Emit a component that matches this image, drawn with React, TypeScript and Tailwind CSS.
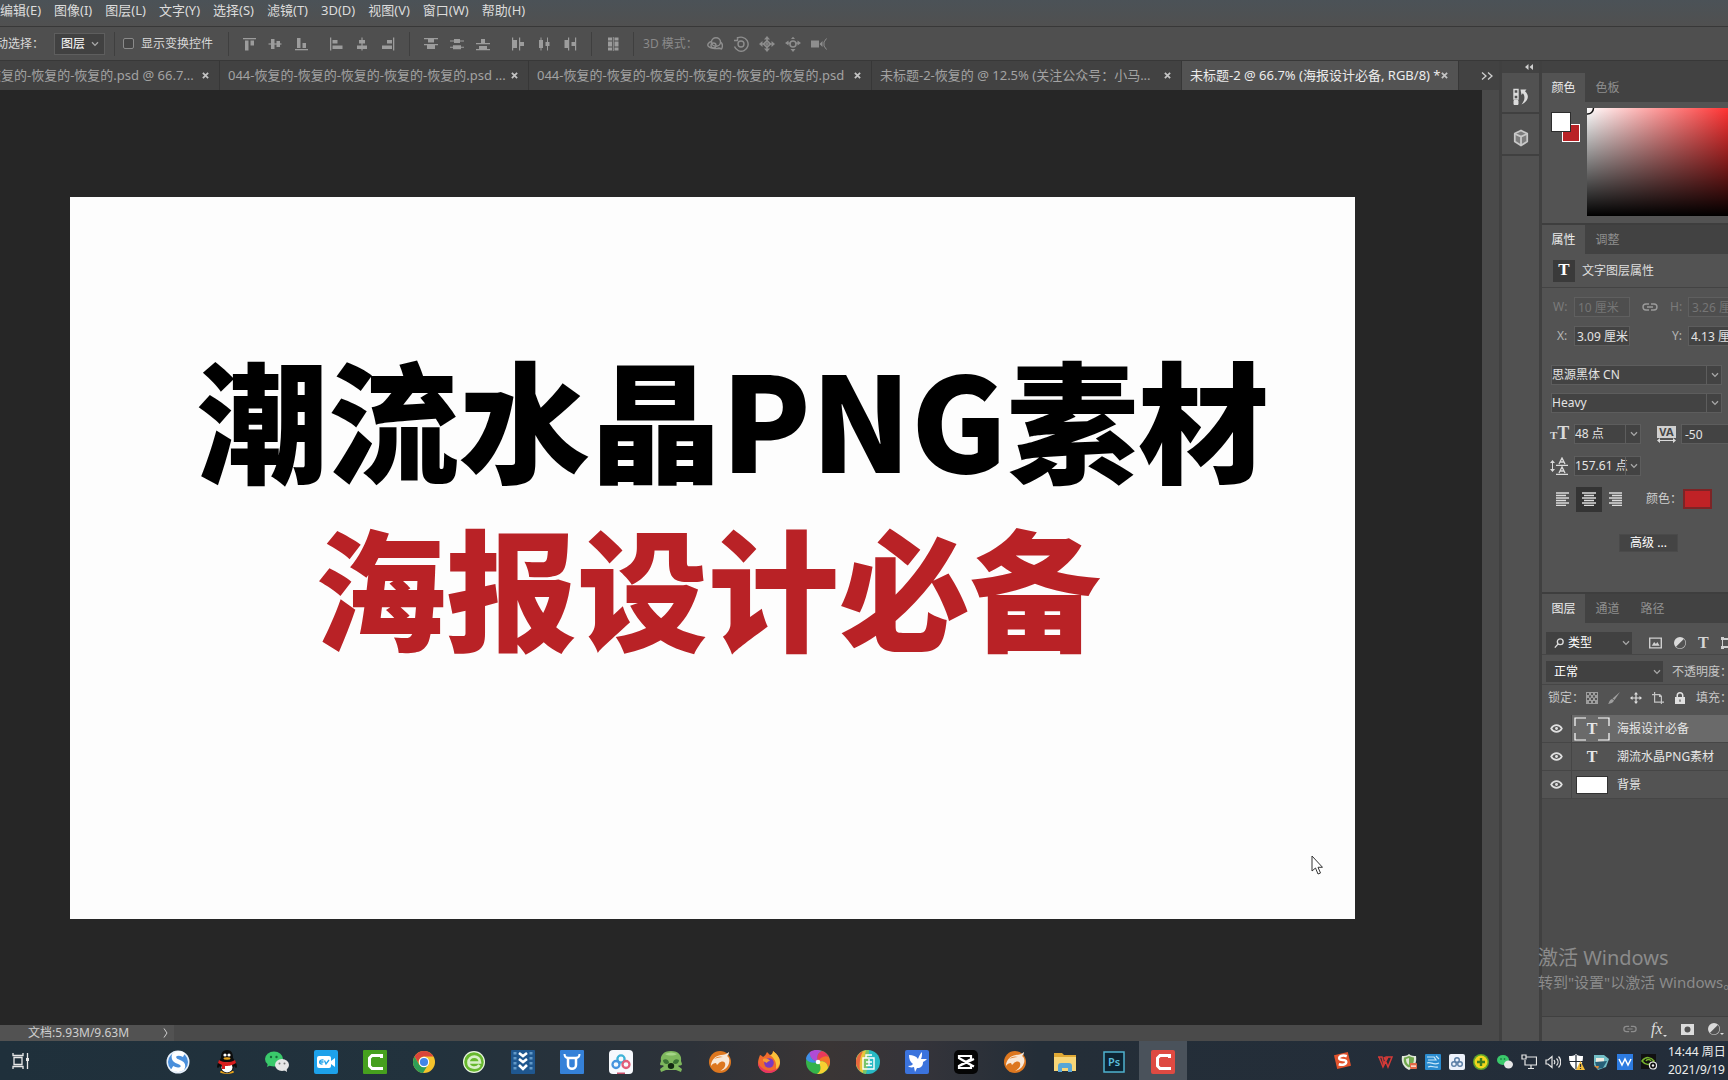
import React from "react";
import type { ReactNode } from "react";

const menus = ["编辑(E)", "图像(I)", "图层(L)", "文字(Y)", "选择(S)", "滤镜(T)", "3D(D)", "视图(V)", "窗口(W)", "帮助(H)"];

const tabs = [
  { title: "恢复的-恢复的-恢复的.psd @ 66.7...", width: "w-[220px]", active: false },
  { title: "044-恢复的-恢复的-恢复的-恢复的-恢复的.psd ...", width: "w-[309px]", active: false },
  { title: "044-恢复的-恢复的-恢复的-恢复的-恢复的-恢复的.psd", width: "w-[343px]", active: false },
  { title: "未标题-2-恢复的 @ 12.5% (关注公众号：小马...", width: "w-[310px]", active: false },
  { title: "未标题-2 @ 66.7% (海报设计必备, RGB/8) *", width: "w-[277px]", active: true },
];

function Icon({ children, size = "size-4", box = "0 0 16 16", color = "text-[#9c9c9c]" }: { children: ReactNode; size?: string; box?: string; color?: string }) {
  return (
    <svg viewBox={box} className={`${size} ${color} shrink-0`} fill="currentColor" aria-hidden="true">
      {children}
    </svg>
  );
}

function Chevron() {
  return (
    <svg viewBox="0 0 8 6" className="h-1.5 w-2 text-[#a8a8a8]" fill="none" stroke="currentColor" strokeWidth="1.3" aria-hidden="true">
      <path d="M1 1.2 4 4.4 7 1.2" />
    </svg>
  );
}

function Divider() {
  return <div className="h-6 w-px shrink-0 bg-[#3f3f3f]" />;
}

/* ---------- options bar ---------- */

const alignIcons: { name: string; art: ReactNode }[][] = [
  [
    { name: "顶对齐", art: <><path d="M2 2h13v1.3H2z" /><path d="M4 4.5h3.5v10H4zM9.5 4.5H13v5H9.5z" /></> },
    { name: "垂直居中对齐", art: <><path d="M1.5 7.4h13v1.2h-13z" /><path d="M4 3h3.5v10H4zM9.5 5H13v6H9.5z" /></> },
    { name: "底对齐", art: <><path d="M2 13h13v1.3H2z" /><path d="M4 2h3.5v10H4zM9.5 7H13v5H9.5z" /></> },
  ],
  [
    { name: "左对齐", art: <><path d="M2 1.5h1.3v13H2z" /><path d="M4.5 4h5v3.500h-5zM4.500 9.500h10V13h-10z" /></> },
    { name: "水平居中对齐", art: <><path d="M7.400 1.500h1.200v13H7.400z" /><path d="M5 4h6v3.500H5zM3 9.500h10V13H3z" /></> },
    { name: "右对齐", art: <><path d="M13 1.500h1.300v13H13z" /><path d="M7 4h5v3.500H7zM2 9.500h10V13H2z" /></> },
  ],
  [
    { name: "按顶分布", art: <><path d="M1 2h14v1.200H1zM1 8h14v1.200H1z" /><path d="M5 3h6v3.500H5zM4 9h8v4H4z" /></> },
    { name: "垂直居中分布", art: <><path d="M1 4.500h14v1H1zM1 10.800h14v1H1z" /><path d="M5 3h6v4H5zM4 9.300h8v4H4z" /></> },
    { name: "按底分布", art: <><path d="M1 7h14v1.200H1zM1 13h14v1.200H1z" /><path d="M6 3h4v4H6zM4 10h8v3.500H4z" /></> },
  ],
  [
    { name: "按左分布", art: <><path d="M2 1.500h1.200v13H2zM9 1.500h1.200v13H9z" /><path d="M3 4h4v8H3zM10 6h4v4h-4z" /></> },
    { name: "水平居中分布", art: <><path d="M4.500 1.500h1v13h-1zM11 1.500h1v13h-1z" /><path d="M3 4h4v8H3zM9.500 6h4v4h-4z" /></> },
    { name: "按右分布", art: <><path d="M6 1.500h1.200v13H6zM13 1.500h1.200v13H13z" /><path d="M2.500 4h4v8h-4zM9.500 6h4v4h-4z" /></> },
  ],
];

const modeIcons: { name: string; art: ReactNode }[] = [
  { name: "旋转 3D 对象", art: <g fill="none" stroke="currentColor" strokeWidth="1.4"><ellipse cx="9" cy="6" rx="4.500" ry="4.300" /><path d="M4.500 5.500C1 6.500 0 9 1.500 10.500s7 3 12 1.500M13.500 6c2 1.500 2.500 4 1 7l-4-1" /><circle cx="6.500" cy="9.500" r="2.500" /></g> },
  { name: "滚动 3D 对象", art: <g fill="none" stroke="currentColor" strokeWidth="1.4"><circle cx="8" cy="8" r="3" /><path d="M4 2.500A7 7 0 1 1 1.500 10.500M1 4.500h3.500V1" /></g> },
  { name: "拖动 3D 对象", art: <><path d="m8 0 3 3.500H5zM8 16l3-3.500H5zM0 8l3.500-3v6zM16 8l-3.500-3v6z" /><path fill="none" stroke="currentColor" strokeWidth="1.500" d="M8 4.500 11.500 8 8 11.500 4.500 8z" /><path d="M7.400 3h1.200v10H7.400zM3 7.400h10v1.200H3z" /></> },
  { name: "滑动 3D 对象", art: <><path d="m8 16 2.500-3h-5zM8 .8 10 3H6zM0 7l3.500-2.500v5zM16 7l-3.500-2.500v5z" /><circle cx="8" cy="8" r="3" fill="none" stroke="currentColor" strokeWidth="1.600" /><path d="M3 6.500h2.500v1.200H3zM10.500 6.500H13v1.200h-2.500z" /></> },
  { name: "缩放 3D 相机", art: <><path d="M0 4.500h8v7H0zM8.500 8 11.500 5v6z" /><path fill="none" stroke="currentColor" d="M15.500 2.500 13 6v4l2.500 3.500" /></> },
];

function OptionsBar() {
  return (
    <div className="flex h-[34px] shrink-0 items-center border-b border-[#383838] bg-[#4f4f4f] text-xs text-[#d8d8d8]">
      <label htmlFor="auto-select" className="-ml-1 w-[58px] shrink-0 whitespace-nowrap">动选择：</label>
      <div className="relative w-[51px] shrink-0">
        <select id="auto-select" className="h-[22px] w-full appearance-none border border-[#5e5e5e] bg-[#414141] pl-1.5 text-xs text-white">
          <option>图层</option>
          <option>组</option>
        </select>
        <span className="pointer-events-none absolute top-2 right-1.5"><Chevron /></span>
      </div>
      <div className="ml-[9px] flex shrink-0 items-center gap-2">
        <Divider />
        <label className="flex items-center gap-[7px] whitespace-nowrap">
          <input type="checkbox" className="size-[11px] appearance-none rounded-xs border border-[#8a8a8a] bg-[#454545]" />
          显示变换控件
        </label>
      </div>
      <div className="ml-[15px] flex shrink-0 items-center">
        <Divider />
        <div className="ml-3 flex gap-[19px]">
          {alignIcons.slice(0, 2).map((group, i) => (
            <div key={i} className="flex gap-2.5">
              {group.map((g) => <button key={g.name} type="button" aria-label={g.name}><Icon>{g.art}</Icon></button>)}
            </div>
          ))}
        </div>
        <div className="mx-[13px]"><Divider /></div>
        <div className="flex gap-[19px]">
          {alignIcons.slice(2).map((group, i) => (
            <div key={i} className="flex gap-2.5">
              {group.map((g) => <button key={g.name} type="button" aria-label={g.name}><Icon>{g.art}</Icon></button>)}
            </div>
          ))}
        </div>
        <div className="mx-[13px]"><Divider /></div>
        <button type="button" aria-label="自动对齐图层">
          <Icon><path d="M3 1.500h4v3H3zM3 5.500h4v5H3zM3 11.500h4v3H3zM9.500 1.500h4v3h-4zM9.500 5.500h4v5h-4zM9.500 11.500h4v3h-4zM7.800 1h.9v14h-.9z" /></Icon>
        </button>
        <div className="mr-[9px] ml-3"><Divider /></div>
        <span className="w-16 whitespace-nowrap text-[#8a8a8a]">3D 模式：</span>
        <div className="flex gap-2.5">
          {modeIcons.map((m) => <button key={m.name} type="button" aria-label={m.name}><Icon color="text-[#8e8e8e]">{m.art}</Icon></button>)}
        </div>
      </div>
    </div>
  );
}

function DocumentTabs() {
  return (
    <div className="flex h-[29px] shrink-0 items-stretch bg-[#424242] text-[13px]">
      {tabs.map((t, i) => (
        <div key={i} className={`${t.width} ${t.active ? "bg-[#535353] text-[#ececec]" : "text-[#a3a3a3]"} flex shrink-0 items-center justify-between border-r border-[#373737] pr-2.5 pl-2`}>
          <button type="button" className={`${i === 0 ? "-ml-5" : ""} shrink-0 whitespace-nowrap`}>{t.title}</button>
          <button type="button" aria-label="关闭" className="shrink-0 text-[#c4c4c4]">
            <svg viewBox="0 0 8 8" className="size-[7px]" stroke="currentColor" strokeWidth="2"><path d="m1 1 6 6M7 1 1 7" /></svg>
          </button>
        </div>
      ))}
      <button type="button" aria-label="更多文档" className="mr-1.5 ml-auto text-[#d0d0d0]">
        <svg viewBox="0 0 12 8" className="h-2 w-3" fill="none" stroke="currentColor" strokeWidth="1.3"><path d="m1 .5 4 3.500-4 3.500M7 .5l4 3.500-4 3.500" /></svg>
      </button>
    </div>
  );
}

function Canvas() {
  return (
    <main className="relative flex min-w-0 flex-1 bg-[#262626] pt-[107px] pr-[127px] pb-[106px] pl-[70px]">
      <div className="min-w-0 flex-1 overflow-hidden bg-[#fdfdfd] pt-[135px] font-['Noto_Sans_CJK_SC',sans-serif] text-[131px] leading-[168px] font-black whitespace-nowrap">
        <h1 className="pl-[127px] text-black">潮流水晶PNG素材</h1>
        <h2 className="pl-[245px] text-[#b92226]">海报设计必备</h2>
      </div>
      <svg viewBox="0 0 12 20" className="absolute right-[159px] bottom-[150px] h-5 w-3" fill="#fff" stroke="#333" aria-hidden="true">
        <path d="M1 1v15l3.500-3 2.500 6 2.500-1L7 12.300h4.500z" />
      </svg>
    </main>
  );
}

/* ---------- right side panels ---------- */

function DockStrip() {
  return (
    <div className="flex w-[41px] shrink-0 flex-col border-r-3 border-l-1 border-[#404040] bg-[#515151]">
      <div className="flex h-3 items-center justify-end bg-[#424242]">
        <svg viewBox="0 0 8 6" className="mr-1.5 h-1.5 w-2" fill="#cfcfcf"><path d="M3.500 0v6L0 3zM8 0v6L4.500 3z" /></svg>
      </div>
      <button type="button" aria-label="历史记录" className="flex h-[41px] items-center justify-center border-b-2 border-[#404040] pt-2">
        <svg viewBox="0 0 16 18" className="h-[18px] w-4" fill="none" stroke="#dcdcdc"><path strokeWidth="1.4" d="M1 1.500h4v4H1zM1 7h4v4H1z" /><path fill="#dcdcdc" d="M1 12.500h4v4H1z" /><path fill="#dcdcdc" stroke="none" d="M7.500 1.500h6l-1.500 1.700c4.500 4 4 9.500-3.500 13.300 3.200-4 4-7.800 1.400-11.200L8.500 7z" /></svg>
      </button>
      <button type="button" aria-label="3D" className="flex h-[42px] items-center justify-center border-b-2 border-[#404040] pt-2">
        <svg viewBox="0 0 18 20" className="h-[18px] w-4" fill="none" stroke="#c8c8c8" strokeWidth="2" strokeLinejoin="round"><path fill="#7d7d7d" d="m9 1.500 7 3.500v9L9 18.500 2 14V5z" /><path d="m2.500 5.500 6.500 3 6.500-3M9 8.500v9.500" /></svg>
      </button>
    </div>
  );
}

function PanelTabs({ names }: { names: string[] }) {
  return (
    <div className="flex h-[29px] shrink-0 bg-[#424242] text-xs">
      {names.map((n, i) => (
        <button key={n} type="button" className={i === 0 ? "w-[43px] bg-[#535353] text-[#ececec]" : "w-[45px] text-[#8f8f8f]"}>{n}</button>
      ))}
    </div>
  );
}

const field = "h-5 border border-[#5d5d5d] bg-[#434343] text-xs text-[#e4e4e4]";

function Combo({ label, value, width }: { label: string; value: string; width: string }) {
  return (
    <div className={`relative shrink-0 ${width}`}>
      <select aria-label={label} className={`${field} w-full appearance-none pr-3`}><option>{value}</option></select>
      <span className="pointer-events-none absolute inset-y-0 right-0 flex w-4 items-center justify-center border-l border-[#5d5d5d]"><Chevron /></span>
    </div>
  );
}

function ColorPanel() {
  return (
    <section>
      <PanelTabs names={["颜色", "色板"]} />
      <div className="flex h-[123px] items-start border-b-2 border-[#3e3e3e] pt-1.5">
        <div className="relative mt-1 ml-[9px] h-8 w-9 shrink-0">
          <button type="button" aria-label="背景色" className="absolute top-3 left-[11px] size-[18px] border border-white bg-[#b92226]" />
          <button type="button" aria-label="前景色" className="absolute top-0 left-0 size-5 border border-[#2d2d2d] bg-white" />
        </div>
        <div className="h-[108px] min-w-0 flex-1 overflow-hidden bg-[linear-gradient(to_top,#000,transparent),linear-gradient(to_right,#fff,#f00_125%)]">
          <svg viewBox="0 0 8 8" className="size-2" fill="none" stroke="#111" strokeWidth="1.5"><path d="M6.500 0A6 6 0 0 1 0 6" /></svg>
        </div>
      </div>
    </section>
  );
}

const lineArt = {
  left: "M0 1h13M0 3.5h10M0 6h13M0 8.5h10M0 11h13M0 13.5h10",
  center: "M0 1h14M2 3.5h10M0 6h14M2 8.5h10M0 11h14M2 13.5h10",
  right: "M1 1h13M4 3.5h10M1 6h13M4 8.5h10M1 11h13M4 13.5h10",
};

function PropertiesPanel() {
  return (
    <section className="h-[369px] shrink-0 overflow-hidden border-b-2 border-[#3e3e3e] text-xs whitespace-nowrap">
      <PanelTabs names={["属性", "调整"]} />
      <div className="flex h-[34px] items-center gap-[7px] border-b border-[#434343] pl-[11px] text-[#dedede]">
        <span className="flex size-[22px] items-center justify-center bg-[#3a3a3a] font-['Liberation_Serif',serif] text-[17px] font-bold text-white">T</span>
        文字图层属性
      </div>
      <div className="mt-[9px] flex h-5 items-center pl-[11px] text-[#7b7b7b]">
        <label htmlFor="pw" className="w-[21px] shrink-0">W:</label>
        <input id="pw" disabled defaultValue="10 厘米" className="h-5 w-14 shrink-0 border border-[#5f5f5f] bg-[#4e4e4e] px-[3px] text-xs text-[#757575]" />
        <svg viewBox="0 0 16 8" className="mx-3 h-2 w-4 shrink-0" fill="none" stroke="#9b9b9b" strokeWidth="1.4"><path d="M7 1H4a3 3 0 0 0 0 6h3M9 1h3a3 3 0 0 1 0 6H9M5 4h6" /></svg>
        <label htmlFor="ph" className="w-[18px] shrink-0">H:</label>
        <input id="ph" disabled defaultValue="3.26 厘米" className="h-5 w-14 shrink-0 border border-[#5f5f5f] bg-[#4e4e4e] px-[3px] text-xs text-[#757575]" />
      </div>
      <div className="mt-[9px] flex h-5 items-center pl-[15px] text-[#b5b5b5]">
        <label htmlFor="px" className="w-[17px] shrink-0">X:</label>
        <input id="px" defaultValue="3.09 厘米" className={`${field} w-14 shrink-0 pl-[2px]`} />
        <label htmlFor="py" className="ml-[42px] w-4 shrink-0">Y:</label>
        <input id="py" defaultValue="4.13 厘米" className={`${field} w-14 shrink-0 pl-[2px]`} />
      </div>
      <div className="mt-[19px] flex flex-col gap-2 pl-[9px]">
        <Combo label="字体" value="思源黑体 CN" width="w-[171px]" />
        <Combo label="字重" value="Heavy" width="w-[171px]" />
      </div>
      <div className="mt-[11px] flex h-5 items-center pl-2">
        <span className="flex w-6 shrink-0 items-baseline font-['Liberation_Serif',serif] leading-5 font-bold text-[#dadada]"><span className="text-[11px]">T</span><span className="text-[18px]">T</span></span>
        <Combo label="字号" value="48 点" width="w-[67px]" />
        <span className="mr-[5px] ml-4 flex w-[19px] shrink-0 flex-col items-center text-[#dadada]">
          <span className="w-full bg-[#d0d0d0] text-center text-[11px] leading-3 font-bold text-[#444]">VA</span>
          <svg viewBox="0 0 19 5" className="h-[5px] w-[19px]" fill="currentColor"><path d="m0 2.500 3-2.500v2h13V0l3 2.500L16 5V3H3v2z" /></svg>
        </span>
        <input aria-label="字距" defaultValue="-50" className={`${field} w-16 shrink-0 pl-[3px]`} />
      </div>
      <div className="mt-3 flex h-5 items-center pl-2">
        <span className="flex w-6 shrink-0 items-center gap-px text-[#dadada]">
          <svg viewBox="0 0 5 12" className="h-3 w-[5px]" fill="currentColor"><path d="m2.500 0 2.500 3H3v6h2l-2.500 3L0 9h2V3H0z" /></svg>
          <svg viewBox="0 0 12 18" className="h-[18px] w-3" fill="none" stroke="currentColor" strokeWidth="1.3"><path d="M0 8.300h12M0 17.300h12M3 7l3-6 3 6M4 5h4M3 16l3-6 3 6M4 14h4" /></svg>
        </span>
        <Combo label="行距" value="157.61 点" width="w-[67px]" />
      </div>
      <div className="mt-2.5 flex h-[26px] items-center pl-2">
        {(["left", "center", "right"] as const).map((a) => (
          <button key={a} type="button" aria-label={a} className={`${a === "center" ? "bg-[#343434]" : ""} flex h-[25px] w-[26px] items-center justify-center`}>
            <svg viewBox="0 0 14 14" className="size-3.5" stroke="#dcdcdc" strokeWidth="1.3"><path d={lineArt[a]} /></svg>
          </button>
        ))}
        <label htmlFor="text-color" className="ml-[18px] w-[37px] shrink-0 text-[#cfcfcf]">颜色：</label>
        <button id="text-color" type="button" aria-label="文字颜色" className="h-5 w-[29px] shrink-0 border-2 border-[#7d2426] bg-[#c02226]" />
      </div>
      <button type="button" className="mt-[22px] ml-[77px] h-[18px] w-[59px] border border-[#4a4a4a] bg-[#444] text-xs leading-4 text-white">高级 ...</button>
    </section>
  );
}

function Eye() {
  return (
    <svg viewBox="0 0 14 10" className="h-[9px] w-[13px]" fill="none" stroke="#e0e0e0" strokeWidth="1.7" aria-hidden="true">
      <path d="M1 5c3-5 9-5 12 0-3 5-9 5-12 0z" /><circle cx="7" cy="5" r="1.600" fill="#e0e0e0" stroke="none" />
    </svg>
  );
}

const layers = [
  { name: "海报设计必备", kind: "text", selected: true },
  { name: "潮流水晶PNG素材", kind: "text", selected: false },
  { name: "背景", kind: "fill", selected: false },
];

function LayersPanel() {
  return (
    <section className="flex min-h-0 flex-1 flex-col text-xs whitespace-nowrap">
      <PanelTabs names={["图层", "通道", "路径"]} />
      <div className="flex h-8 shrink-0 items-center border-b border-[#464646] pt-2 pl-1">
        <div className="relative w-[86px] shrink-0">
          <select aria-label="类型" className="h-[22px] w-full appearance-none bg-[#414141] pl-[22px] text-xs text-white"><option>类型</option></select>
          <svg viewBox="0 0 12 12" className="pointer-events-none absolute top-1.5 left-2 size-2.5" fill="none" stroke="#ddd" strokeWidth="1.6"><circle cx="7.500" cy="4.500" r="3.500" /><path d="m5 7-4 4.500" /></svg>
          <span className="pointer-events-none absolute top-2 right-0.5"><Chevron /></span>
        </div>
        <div className="ml-[17px] flex shrink-0 items-center gap-3">
          <Icon size="h-3 w-[13px]" box="0 0 14 12" color="text-[#cfcfcf]"><path fillRule="evenodd" d="M0 0h14v12H0zM1.500 1.500v9h11v-9z" /><path d="m3 9 2.500-4 2 2 1.500-2 2.500 4z" /></Icon>
          <Icon size="size-3" box="0 0 12 12" color="text-[#dadada]"><path d="M6 0a6 6 0 1 1 0 12A6 6 0 0 1 6 0zm3.800 2L2 9.800A5 5 0 0 0 9.800 2z" fillRule="evenodd" /></Icon>
          <span className="font-['Liberation_Serif',serif] text-base leading-4 font-bold text-[#d5d5d5]">T</span>
          <Icon size="size-3" box="0 0 12 12" color="text-[#cfcfcf]"><path d="M0 0h3v1h6V0h3v3h-1v6h1v3H9v-1H3v1H0V9h1V3H0zm2 3v6h7V3z" fillRule="evenodd" /></Icon>
        </div>
      </div>
      <div className="flex h-[30px] shrink-0 items-center border-b border-[#464646] pt-1 pl-1">
        <div className="relative w-[117px] shrink-0">
          <select aria-label="混合模式" className="h-[21px] w-full appearance-none bg-[#414141] pl-2 text-xs text-white"><option>正常</option></select>
          <span className="pointer-events-none absolute top-2 right-0.5"><Chevron /></span>
        </div>
        <span className="ml-[9px] text-[#c6c6c6]">不透明度：</span>
      </div>
      <div className="flex h-[30px] shrink-0 items-center pb-1 pl-1.5 text-[#c6c6c6]">
        <span className="w-[38px] shrink-0">锁定：</span>
        <div className="mr-2.5 flex items-center gap-2.5">
          <Icon size="size-3" box="0 0 12 12" color="text-[#9e9e9e]"><path fillRule="evenodd" d="M0 0h12v12H0zM1 1v2h2V1zm4 0v2h2V1zm4 0v2h2V1zM3 3.500v2h2v-2zm4 0v2h2v-2zM1 6v2h2V6zm4 0v2h2V6zm4 0v2h2V6zM3 9v2h2V9zm4 0v2h2V9z" /></Icon>
          <Icon size="size-3" box="0 0 12 12" color="text-[#9e9e9e]"><path d="M12 0 6.500 8 4.500 6.500zM4 7l2 1.500C5 11 3 11.500 0 12c1.500-1.500 1-4 4-5z" /></Icon>
          <Icon size="size-3" box="0 0 12 12" color="text-[#e0e0e0]"><path d="m6 0 2 2.500H6.600v2.900h2.900V4L12 6 9.500 8V6.600H6.600v2.900H8L6 12 4 9.500h1.400V6.600H2.500V8L0 6l2.500-2v1.400h2.900V2.500H4z" /></Icon>
          <Icon size="size-3" box="0 0 12 12" color="text-[#c4c4c4]"><path fillRule="evenodd" d="M2 0h1.200v2H8l2 2v5.500h2v1.200h-2V12H8.800v-1.300H2V3.200H0V2h2zm1.200 3.200v6.300h5.600V5H7V3.200z" /></Icon>
          <Icon size="size-3" box="0 0 12 12" color="text-[#e0e0e0]"><path fillRule="evenodd" d="M1 5h1.500V3.500a3.500 3.500 0 0 1 7 0V5H11v7H1zm3 0h4V3.500a2 2 0 0 0-4 0zm1.400 2.500v2.300h1.200V7.500z" /></Icon>
        </div>
        <span>填充：</span>
      </div>
      <ul className="min-h-0 flex-1 border-b border-[#404040] bg-[#4c4c4c] text-[#e6e6e6]">
        {layers.map((l) => (
          <li key={l.name} className={`${l.selected ? "bg-[#6a6a6a]" : "bg-[#535353]"} flex h-7 items-stretch border-b border-[#464646]`}>
            <button type="button" aria-label="可见性" className="flex w-[30px] shrink-0 items-center justify-center border-r border-[#464646] bg-[#535353]"><Eye /></button>
            <div className="flex w-[45px] shrink-0 items-center pl-0.5">
              {l.kind === "fill" ? (
                <span className="ml-0.5 h-[18px] w-8 border border-[#333] bg-white" />
              ) : (
                <span className="relative flex h-6 w-9 items-center justify-center font-['Liberation_Serif',serif] text-base font-bold">
                  T
                  {l.selected && (
                    <svg viewBox="0 0 36 24" className="absolute inset-0 h-6 w-9" fill="none" stroke="#fff" strokeWidth="1.2"><path d="M12 1H1v8M24 1h11v8M1 16v7h11M35 16v7H24" /></svg>
                  )}
                </span>
              )}
            </div>
            <span className="self-center">{l.name}</span>
          </li>
        ))}
      </ul>
      <div className="flex h-6 shrink-0 items-center gap-3.5 pl-[81px] text-[#dcdcdc]">
        <svg viewBox="0 0 16 8" className="h-2 w-3.5 shrink-0" fill="none" stroke="#8d8d8d" strokeWidth="1.4"><path d="M7 1H4a3 3 0 0 0 0 6h3M9 1h3a3 3 0 0 1 0 6H9M5 4h6" /></svg>
        <span className="flex items-end font-['Liberation_Serif',serif] text-base leading-4 italic">fx<svg viewBox="0 0 4 2" className="h-0.5 w-1" fill="currentColor"><path d="M0 0h4L2 2z" /></svg></span>
        <svg viewBox="0 0 13 11" className="h-[11px] w-[13px] shrink-0" fill="#dcdcdc"><path fillRule="evenodd" d="M0 0h13v11H0zm6.500 2.500a3 3 0 1 0 0 6 3 3 0 0 0 0-6z" /></svg>
        <span className="flex items-end">
          <Icon size="size-3" box="0 0 12 12" color="text-[#dadada]"><path d="M6 0a6 6 0 1 1 0 12A6 6 0 0 1 6 0zm3.800 2L2 9.800A5 5 0 0 0 9.800 2z" fillRule="evenodd" /></Icon>
          <svg viewBox="0 0 4 2" className="h-0.5 w-1" fill="currentColor"><path d="M0 0h4L2 2z" /></svg>
        </span>
      </div>
    </section>
  );
}

/* ---------- taskbar ---------- */

const Rhino = () => (
  <>
    <circle cx="12" cy="12" r="11" fill="#dd771f" />
    <path fill="#f8e8d8" d="M3 16c0-6 4-10 10-11 3 0 6-1 8-3 0 2-1 3-2 4 2 1 3 4 2 7-1 4-4 7-9 8 4-2 6-5 5-8-1-2-4-2-6 0l-2 2-1-2c-2 0-4 1-5 3z" />
    <path fill="#e58a3b" d="M6 9c3-3 7-3 9-2-3 0-6 1-9 2z" />
  </>
);

const taskIcons: { name: string; art: ReactNode }[] = [
  { name: "搜狗浏览器", art: <><circle cx="12" cy="12" r="11.500" fill="#e8f1fb" /><circle cx="12" cy="12" r="10" fill="#4a8fdb" /><path fill="none" stroke="#fff" strokeWidth="4.500" d="M18 5c-6-3-11-1-10 3 1 5 9 3 9 8 0 4-6 5-11 2" /></> },
  { name: "QQ", art: <><ellipse cx="12" cy="22" rx="7" ry="1.800" fill="#e8a31b" /><path fill="#0c0c0c" d="M12 0c5 0 6 4 6 8 2 3 4 6 4 9-1 2-2 0-3-1-1 5-3 7-7 7s-6-2-7-7c-1 1-2 3-3 1 0-3 2-6 4-9 0-4 1-8 6-8z" /><ellipse cx="12" cy="17.500" rx="5.500" ry="5" fill="#fff" /><path fill="#d81e1e" d="M4 10c5 3 11 3 16 0l1 3c-5 3-8 3-11 3v3H7v-4l-4-2z" /><circle cx="10" cy="5" r="1.600" fill="#fff" /><circle cx="14" cy="5" r="1.600" fill="#fff" /><ellipse cx="12" cy="8.500" rx="3.500" ry="1.200" fill="#e8a31b" /></> },
  { name: "微信", art: <><ellipse cx="9" cy="9" rx="9" ry="7.500" fill="#3ac96b" /><path fill="#3ac96b" d="m3 13-1 4 4-2z" /><circle cx="6" cy="7" r="1.200" fill="#17693a" /><circle cx="11.500" cy="7" r="1.200" fill="#17693a" /><ellipse cx="17" cy="15" rx="7" ry="6" fill="#e6e6e6" /><path fill="#e6e6e6" d="m19 20 3 2-.5-4z" /><circle cx="14.500" cy="13.500" r="1" fill="#777" /><circle cx="19.500" cy="13.500" r="1" fill="#777" /></> },
  { name: "EV录屏", art: <><rect width="24" height="24" rx="2" fill="#1da1ea" /><rect x="3" y="6" width="14" height="12" rx="2" fill="#fff" /><path fill="#fff" d="m17 11 4-3v9l-4-3z" /><path fill="none" stroke="#1da1ea" strokeWidth="1.300" d="M9.500 10c-5-.5-5 4.500-1 4m-2-2h3m1-1.500 1.500 3.500 3-4" /></> },
  { name: "Camtasia", art: <><rect width="24" height="24" rx="1" fill="#46a01e" /><path fill="none" stroke="#fff" strokeWidth="3" d="M18.500 8V5.500H9L6.500 8v8L9 18.500h9.500V17" /></> },
  { name: "Chrome", art: <><circle cx="12" cy="12" r="11" fill="#f5c32c" /><path fill="#d9453a" d="M2.500 6.500A11 11 0 0 1 21.500 6.500H12A5.500 5.500 0 0 0 7.200 14.700z" /><path fill="#2f9e57" d="M2.500 6.500A11 11 0 0 0 11 23l5-8.200a5.500 5.500 0 0 1-8.800 0z" /><circle cx="12" cy="12" r="5.200" fill="#fff" /><circle cx="12" cy="12" r="4.100" fill="#4285e8" /></> },
  { name: "360浏览器", art: <><circle cx="12" cy="12" r="11" fill="#eaf7df" /><circle cx="12" cy="12" r="9.800" fill="#67b82e" /><path fill="none" stroke="#d9f0c8" strokeWidth="2.700" d="M6 12.500h12c0-8-11.500-7.500-11.500 0 0 6 8.500 6.500 11 2.500" /></> },
  { name: "下载器", art: <><rect width="24" height="24" rx="1" fill="#1f578f" /><path stroke="#6299c8" strokeWidth="3" strokeDasharray="2.500 2.500" d="M4 2v20M20 2v20" /><path fill="none" stroke="#fff" strokeWidth="2.600" d="m8 3 4 3 4-3M8 9l4 3 4-3M8 15l4 4 4-4" /></> },
  { name: "U盘工具", art: <><rect width="24" height="24" rx="1" fill="#3581d8" /><path fill="none" stroke="#fff" strokeWidth="2.500" d="M8 8v7c0 5 8 5 8 0V8z" /><path fill="none" stroke="#fff" strokeWidth="2" d="M4.500 4c0 3 1 4 4 4M19.500 4c0 3-1 4-4 4" /></> },
  { name: "百度网盘", art: <><rect width="24" height="24" rx="4" fill="#f7f9fd" /><g fill="none" strokeWidth="2.300"><circle cx="12" cy="9" r="3.600" stroke="#3eb3d8" /><circle cx="7" cy="14.500" r="3.500" stroke="#4794df" /><circle cx="17" cy="14.500" r="3.500" stroke="#e35d79" /></g><path fill="#c64e69" d="M8 22.500h8V24H8z" /></> },
  { name: "绿色骷髅", art: <><path fill="#7eb85d" d="M12 1c8 0 11 5 10 10l1 3c0 2-3 1-4 2l4 3-1 3-5-2H7l-5 2-1-3 4-3c-1-1-4 0-4-2l1-3C1 6 4 1 12 1z" /><path fill="#a5d588" d="M6 4c4-2 8-2 12 0-3 2-9 2-12 0z" /><path fill="#3c7335" d="M4 10c3-2 6 0 6 3-2 2-6 1-6-3zM20 10c-3-2-6 0-6 3 2 2 6 1 6-3z" /><ellipse cx="12" cy="16" rx="3.200" ry="3" fill="#132813" /></> },
  { name: "犀牛", art: <Rhino /> },
  { name: "Firefox", art: <><path fill="#f06a2d" d="M3 5c1 0 2 1 3 2 2-1 3-3 4-5l3 3c2 0 3-2 3-4 5 4 7 7 7 12a11 10 0 0 1-22 0c0-3 1-5 2-8z" /><path fill="#e83464" d="M1 12c3 9 13 11 20 6-3 4-6 5-9 5C5 23 1 18 1 12z" /><path fill="#f9c13a" d="M16 1c5 4 7 7 7 12-1 3-2 5-4 6 1-7-2-11-6-14 2 0 3-2 3-4z" /><circle cx="12" cy="13" r="4.800" fill="#7b3ac0" /><path fill="#f59a35" d="M6 9c3-1 6 0 7 2-2 0-3 1-3 2l-4-2z" /></> },
  { name: "色轮", art: <><circle cx="12" cy="12" r="12" fill="#35b34a" /><path fill="#e9395b" d="M12 12C10 7 12 2 16 1c4 1 6 4 7 6-4-1-9 1-11 5z" /><path fill="#f3732a" d="M12 12c2-5 7-7 11-5 2 5 1 8-1 11 0-5-5-8-10-6z" /><path fill="#f7d032" d="M12 12c5-2 10 1 10 6-3 5-7 6-11 6 5-3 4-9 1-12z" /><path fill="#3f8ee8" d="M12 12C7 14 2 12 0 9c0-3 2-5 4-7-1 5 3 9 8 10z" /><path fill="#b04bd5" d="M12 12C7 11 3 7 4 2c4-3 9-2 12-1-4 1-6 6-4 11z" /><circle cx="12" cy="12" r="2.300" fill="#fff" /></> },
  { name: "彩虹便签", art: <><circle cx="12" cy="12" r="12" fill="#28b9c4" /><path fill="#79c46a" d="M13 0a12 12 0 0 0-3 24c2-8 3-16 3-24z" /><path fill="#e9c43a" d="M10 .2a12 12 0 0 0-3 22.700c0-8 1-16 3-22.700z" /><path fill="#e8673e" d="M7 1a12 12 0 0 0-3 20c-1-7 0-14 3-20z" /><path fill="none" stroke="#fff" strokeWidth="1.400" d="M7 8h11v11H7zM10 8V5h6M10 12h6M10 15.500h6M13 9v7" /></> },
  { name: "飞鸟", art: <><rect width="24" height="24" rx="2" fill="#3b73dd" /><path fill="#fff" d="M4 5c4 0 7 1 9 4 1-3 2-5 4-7 0 3 0 5-1 7h6c-1 1-2 2-4 3 0 4-2 6-6 6l-2 4-1-5c-3 1-5 0-6-1 3 0 4-1 5-2C5 12 4 9 4 5z" /></> },
  { name: "剪映", art: <><rect width="24" height="24" rx="5" fill="#050505" /><path fill="none" stroke="#fff" strokeWidth="2.200" d="M20 9 5 16v2h12v-3L5 8V6h12v3l-12 7M17 15l3 1.500" /></> },
  { name: "犀牛2", art: <Rhino /> },
  { name: "文件资源管理器", art: <><path fill="#e0a935" d="M1 3h8l2 2h12v4H1z" /><path fill="#f8d678" d="M1 7h22v14H1z" /><path fill="#58a6d6" d="M5 22v-6c0-2 1-3 3-3h8c2 0 3 1 3 3v6h-4v-4H9v4z" /></> },
  { name: "Photoshop", art: <><rect x="2" y="2" width="20" height="20" fill="#0d2433" stroke="#4fb2cf" strokeWidth="1.500" /><text x="12" y="16" textAnchor="middle" fontSize="11" fontWeight="600" fill="#5bbddb">Ps</text></> },
  { name: "Camtasia 录制", art: <><rect width="24" height="24" rx="2" fill="#de4a42" /><path fill="none" stroke="#fff" strokeWidth="3" d="M18.500 8V5.500H9L6.500 8v8L9 18.500h9.500V17" /></> },
];

const trayIcons: { name: string; art: ReactNode }[] = [
  { name: "WPS", art: <path fill="none" stroke="#d43a37" strokeWidth="1.500" d="M1 3h4l2 8 2-8h6l-4 10-4-10M2 3l4 10 5-10" /> },
  { name: "安全卫士", art: <><path fill="#dfe7d8" d="M8 0c2 2 5 2 7 2 1 6-1 11-7 14C2 13 0 8 1 2c2 0 5 0 7-2z" /><path fill="#72a94e" d="M8 2c2 1 3 1 5 1.500 0 5-1 8-5 10-4-2-6-5-5-10C5 3 6 3 8 2z" /><path fill="#dfe7d8" d="M8 4v7C6 10 5 8 5 5z" /><rect x="9" y="9" width="7" height="6" rx="1" fill="#e46946" /><path fill="#fff" d="M10 11.500h5v1.200h-5z" /></> },
  { name: "网络助手", art: <><rect width="16" height="16" rx="1" fill="#2a8bcf" /><path fill="none" stroke="#c9e7fa" strokeWidth="1.200" d="M2 3h7l2 3H3M2 9c4-2 6 3 12 0M3 13c4-2 6 1 10 0M11 2l3 3" /></> },
  { name: "百度网盘", art: <><rect width="16" height="16" rx="2" fill="#edf2fb" /><g fill="none" stroke="#5a7ea5" strokeWidth="1.400"><circle cx="8" cy="6" r="2.300" /><circle cx="5" cy="10" r="2.300" /><circle cx="11" cy="10" r="2.300" /></g></> },
  { name: "加速器", art: <><circle cx="8" cy="8" r="8" fill="#5ea52c" /><circle cx="8" cy="8" r="6.500" fill="#f2d71d" /><path stroke="#3f7d20" strokeWidth="2.400" d="M8 4v8M4 8h8" /></> },
  { name: "微信", art: <><ellipse cx="6" cy="6" rx="6" ry="5" fill="#3ac96b" /><circle cx="4" cy="5" r=".8" fill="#145c32" /><circle cx="7.500" cy="5" r=".8" fill="#145c32" /><ellipse cx="11.500" cy="10.500" rx="4.500" ry="4" fill="#e6e6e6" /></> },
  { name: "网络", art: <path fill="none" stroke="#e8e8e8" strokeWidth="1.200" d="M5 3h10.500v8H4V6M1 1h4v4H1zM10 11v3M7 14.500h6" /> },
  { name: "音量", art: <path fill="none" stroke="#e8e8e8" strokeWidth="1.200" d="M1 6h2l4-3.500v11L3 10H1zM9 6c1 1.500 1 3 0 4M11.500 4.500c2 2 2 5 0 7M13.500 2.500c3 3 3 8 0 11" /> },
  { name: "Windows 安全中心", art: <><path fill="#fff" d="M7 0c2 2 4 2 7 2 0 7-2 11-7 14C2 13 0 9 0 2c3 0 5 0 7-2z" /><path stroke="#222c37" strokeWidth="1.200" d="M7 1v14M0 7.500h14" /><path fill="#f4bd3a" d="m11.500 7 4.500 9H7z" /><path stroke="#333" strokeWidth="1.200" d="M11.500 10v3M11.500 14v1" /></> },
  { name: "工具箱", art: <><path fill="#74bfc7" d="M1 1h10l5 4-3 8-8 3-4-5z" /><path fill="#f0ece0" d="M3 4h8v4H3z" /><path fill="#276078" d="m2 8 12-1-4 7-6 1z" /><path fill="#d98c3f" d="M1 12h5l-1 3z" /></> },
  { name: "WiFi", art: <><rect width="16" height="16" fill="#2d7be0" /><path fill="none" stroke="#fff" strokeWidth="1.500" d="m2 5 3 6 3-6 3 6 3-6" /></> },
  { name: "NVIDIA", art: <><rect width="15" height="15" fill="#111" /><path fill="none" stroke="#77b52d" strokeWidth="1.500" d="M1 7c4-5 9-4 12 0-4 5-9 4-12 0zm4 0c1-2 4-2 5 0" /><circle cx="12" cy="11.500" r="3.500" fill="#111" stroke="#eee" strokeWidth="1.200" /><circle cx="12" cy="11.500" r="1.200" fill="#eee" /></> },
];

function Taskbar() {
  return (
    <footer className="flex h-[39px] shrink-0 items-center bg-[linear-gradient(to_right,#1f303b_0%,#22323d_25%,#2d3239_40%,#3a3535_48%,#35343a_53%,#242e38_60%,#232d3a_100%)]">
      <button type="button" aria-label="任务视图" className="ml-3 w-[142px] shrink-0">
        <svg viewBox="0 0 18 16" className="h-4 w-[18px]" fill="none" stroke="#e8e8e8" strokeWidth="1.3"><path d="M1 0v2.500h10V0M2 4.500h8v7H2zM1 16v-2.500h10V16M15.500 0v16" /><path strokeWidth="3" d="M15.500 5v3" /></svg>
      </button>
      <nav className="flex h-full w-[1033px] shrink-0 justify-between">
        {taskIcons.map((t, i) => (
          <button key={t.name} type="button" aria-label={t.name} className={`${i === taskIcons.length - 1 ? "bg-[#4a525b]" : ""} flex h-full w-12 items-center justify-center pt-0.5`}>
            <svg viewBox="0 0 24 24" className="size-6">{t.art}</svg>
          </button>
        ))}
      </nav>
      <div className="ml-auto flex h-full shrink-0 items-center">
        <button type="button" aria-label="搜狗输入法" className="mr-[26px]">
          <svg viewBox="0 0 16 16" className="size-[17px]"><path fill="#e2532d" d="m0 3 13-3 3 13-13 3z" /><path fill="none" stroke="#fff" strokeWidth="2.300" d="M12 4C8 2.500 4 4 5 6.500c1 2 6 0 6.500 2.500.5 3-4 3.500-7 2.500" /></svg>
        </button>
        <div className="flex gap-2 pt-0.5">
          {trayIcons.map((t) => (
            <button key={t.name} type="button" aria-label={t.name}><svg viewBox="0 0 16 16" className="size-4">{t.art}</svg></button>
          ))}
        </div>
        <div className="ml-[11px] w-[60px] overflow-hidden text-xs leading-[18px] whitespace-nowrap text-[#ededed]">
          <div>14:44 周日</div>
          <div>2021/9/19</div>
        </div>
      </div>
    </footer>
  );
}

export default function App() {
  return (
    <div className="flex h-screen flex-col overflow-hidden bg-[#4a4a4a] font-['Noto_Sans','Noto_Sans_CJK_SC',sans-serif] select-none">
      <nav className="flex h-[27px] shrink-0 gap-[13px] border-b border-[#383838] bg-linear-to-b from-[#4b5257] to-[#505050] text-[13px] leading-5 text-[#dcdcdc]">
        {menus.map((m) => <button key={m} type="button" className="shrink-0 self-start">{m}</button>)}
      </nav>
      <OptionsBar />
      <div className="flex min-h-0 flex-1">
        <div className="flex min-w-0 flex-1 flex-col">
          <DocumentTabs />
          <div className="flex min-h-0 flex-1">
            <Canvas />
            <div className="w-[17px] shrink-0 bg-[#4a4a4a]" />
          </div>
          <div className="flex h-4 shrink-0 items-center bg-[#4a4a4a] text-xs leading-4 text-[#cfcfcf]">
            <div className="flex h-full w-[174px] items-center justify-between bg-[#525252] pr-1.5 pl-7">
              文档:5.93M/9.63M
              <svg viewBox="0 0 5 10" className="h-2.5 w-[5px]" fill="none" stroke="#cfcfcf"><path d="m1 .5 3 4.500-3 4.500" /></svg>
            </div>
          </div>
        </div>
        <div className="w-[2px] shrink-0 bg-[#404040]" />
        <DockStrip />
        <aside className="relative flex w-[186px] shrink-0 flex-col bg-[#535353]">
          <div className="h-3 shrink-0 bg-[#424242]" />
          <div className="flex min-h-0 flex-1 flex-col overflow-hidden">
            <ColorPanel />
            <PropertiesPanel />
            <LayersPanel />
          </div>
          <div className="pointer-events-none absolute bottom-[49px] -left-1 whitespace-nowrap text-[#8b8b8b]">
            <p className="text-xl leading-7">激活 Windows</p>
            <p className="text-[15px] leading-5">转到"设置"以激活 Windows。</p>
          </div>
        </aside>
      </div>
      <Taskbar />
    </div>
  );
}
